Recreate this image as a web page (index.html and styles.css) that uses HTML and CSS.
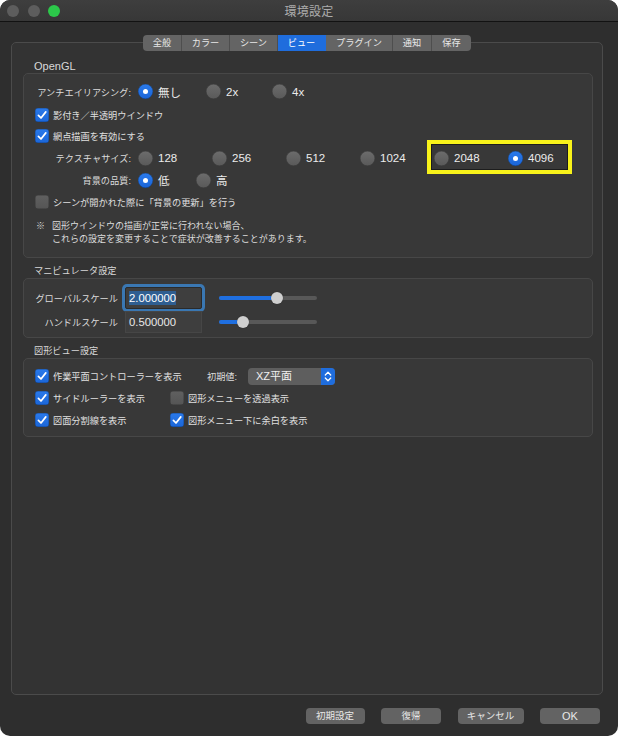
FILE: index.html
```html
<!DOCTYPE html>
<html lang="ja">
<head>
<meta charset="utf-8">
<title>環境設定</title>
<link rel="stylesheet" href="styles.css">
</head>
<body>
<div class="window">
  <div class="titlebar">
    <div class="lights">
      <span class="light grey"></span>
      <span class="light grey"></span>
      <span class="light green"></span>
    </div>
    <div class="title">環境設定</div>
    <div></div>
  </div>
  <div class="content">
    <div class="tabbox">
      <div class="tabs">
        <span class="tab w39">全般</span>
        <span class="tab w48">カラー</span>
        <span class="tab w48">シーン</span>
        <span class="tab w48 active">ビュー</span>
        <span class="tab w67">プラグイン</span>
        <span class="tab w39">通知</span>
        <span class="tab w39 last">保存</span>
      </div>

      <div class="sec-title latin">OpenGL</div>
      <div class="group g1">
        <div class="row h23">
          <span class="lbl lbl-aa">アンチエイリアシング:</span>
          <span class="ritem aa1"><i class="radio on"></i><span class="rl">無し</span></span>
          <span class="ritem aa2"><i class="radio"></i><span class="rl">2x</span></span>
          <span class="ritem"><i class="radio"></i><span class="rl">4x</span></span>
        </div>
        <div class="row h23">
          <span class="cb on"><svg viewBox="0 0 14 14"><path d="M3.4 7.4 L6 10 L10.8 3.9"/></svg></span>
          <span class="cbl">影付き／半透明ウインドウ</span>
        </div>
        <div class="row h20">
          <span class="cb on"><svg viewBox="0 0 14 14"><path d="M3.4 7.4 L6 10 L10.8 3.9"/></svg></span>
          <span class="cbl">網点描画を有効にする</span>
        </div>
        <div class="row h24">
          <span class="lbl lbl-aa">テクスチャサイズ:</span>
          <span class="ritem tx"><i class="radio"></i><span class="rl">128</span></span>
          <span class="ritem tx"><i class="radio"></i><span class="rl">256</span></span>
          <span class="ritem tx"><i class="radio"></i><span class="rl">512</span></span>
          <span class="ritem tx"><i class="radio"></i><span class="rl">1024</span></span>
          <span class="ritem tx"><i class="radio"></i><span class="rl">2048</span></span>
          <span class="ritem tx"><i class="radio on"></i><span class="rl">4096</span></span>
        </div>
        <div class="row h20">
          <span class="lbl lbl-aa">背景の品質:</span>
          <span class="ritem q1"><i class="radio on"></i><span class="rl">低</span></span>
          <span class="ritem"><i class="radio"></i><span class="rl">高</span></span>
        </div>
        <div class="row h24">
          <span class="cb"></span>
          <span class="cbl">シーンが開かれた際に「背景の更新」を行う</span>
        </div>
        <div class="note">
          <span class="mark">※</span>
          <span class="note-text">図形ウインドウの描画が正常に行われない場合、<br>これらの設定を変更することで症状が改善することがあります。</span>
        </div>
        <div class="highlight"></div>
      </div>

      <div class="sec-title spaced">マニピュレータ設定</div>
      <div class="group g2">
        <div class="row h22">
          <span class="lbl lbl-m">グローバルスケール</span>
          <span class="field focus"><span class="sel">2.000000</span></span>
          <span class="slider"><span class="track"><span class="fill" style="width:58px"></span></span><span class="knob" style="left:52px"></span></span>
        </div>
        <div class="row h22 gap2">
          <span class="lbl lbl-m">ハンドルスケール</span>
          <span class="field">0.500000</span>
          <span class="slider"><span class="track"><span class="fill" style="width:24px"></span></span><span class="knob" style="left:18px"></span></span>
        </div>
      </div>

      <div class="sec-title spaced">図形ビュー設定</div>
      <div class="group g3">
        <div class="row h22">
          <span class="col1">
            <span class="cb on"><svg viewBox="0 0 14 14"><path d="M3.4 7.4 L6 10 L10.8 3.9"/></svg></span>
            <span class="cbl">作業平面コントローラーを表示</span>
          </span>
          <span class="lbl lbl-init">初期値:</span>
          <span class="popup"><span class="popup-text">XZ平面</span><span class="stepper"><svg viewBox="0 0 14 17"><path d="M4.3 7 L7 4.3 L9.7 7 M4.3 10 L7 12.7 L9.7 10"/></svg></span></span>
        </div>
        <div class="row h22">
          <span class="col1">
            <span class="cb on"><svg viewBox="0 0 14 14"><path d="M3.4 7.4 L6 10 L10.8 3.9"/></svg></span>
            <span class="cbl">サイドルーラーを表示</span>
          </span>
          <span class="cb"></span>
          <span class="cbl">図形メニューを透過表示</span>
        </div>
        <div class="row h22">
          <span class="col1">
            <span class="cb on"><svg viewBox="0 0 14 14"><path d="M3.4 7.4 L6 10 L10.8 3.9"/></svg></span>
            <span class="cbl">図面分割線を表示</span>
          </span>
          <span class="cb on"><svg viewBox="0 0 14 14"><path d="M3.4 7.4 L6 10 L10.8 3.9"/></svg></span>
          <span class="cbl">図形メニュー下に余白を表示</span>
        </div>
      </div>
    </div>

    <div class="buttons">
      <span class="btn b59">初期設定</span>
      <span class="btn b60">復帰</span>
      <span class="btn b66">キャンセル</span>
      <span class="btn b60 latin">OK</span>
    </div>
  </div>
</div>
</body>
</html>
```
FILE: styles.css
```css
* { box-sizing: border-box; }
html, body { margin: 0; padding: 0; background: #ffffff; }
body {
  font-family: "Liberation Sans", "Noto Sans CJK JP", sans-serif;
  color: #dcdcdc;
}
.window {
  width: 618px;
  height: 736px;
  background: #2e2e2e;
  border-radius: 10px;
  overflow: hidden;
  display: flex;
  flex-direction: column;
}
.titlebar {
  height: 22px;
  flex: none;
  background: linear-gradient(#3e3e3e, #373737);
  border-bottom: 1px solid #121212;
  display: grid;
  grid-template-columns: 1fr auto 1fr;
  align-items: center;
}
.lights { display: flex; gap: 8.5px; padding-left: 7px; }
.light { width: 12px; height: 12px; border-radius: 50%; display: block; }
.light.grey { background: #5d5d5d; }
.light.green { background: #2cc84a; }
.title { font-size: 12px; color: #acacac; letter-spacing: 0.2px; }

.content { flex: 1; padding-top: 20px; }
.tabbox {
  margin: 0 15px 0 11px;
  height: 653px;
  border: 1px solid #4b4b4b;
  border-radius: 5px;
  background: #333333;
  position: relative;
  padding: 16px 9px 0 11px;
}
.tabs {
  position: absolute;
  top: -8px;
  left: 50%;
  transform: translateX(-50%);
  display: flex;
  height: 16px;
  border-radius: 4px;
  overflow: hidden;
  background: #646464;
}
.tab {
  height: 16px;
  line-height: 16px;
  text-align: center;
  font-size: 9.2px;
  color: #e8e8e8;
  border-right: 1px solid #4e4e4e;
}
.tab.last { border-right: none; }
.tab.active { background: #1f6ddd; color: #ffffff; border-right-color: #1f6ddd; }
.w39 { width: 39px; }
.w48 { width: 48px; }
.w67 { width: 67px; }

.sec-title {
  height: 14px;
  line-height: 14px;
  font-size: 9.2px;
  color: #d8d8d8;
  padding-left: 11px;
}
.sec-title.latin { font-size: 11px; }
.sec-title.spaced { margin-top: 6px; }

.group {
  border: 1px solid #474747;
  border-radius: 5px;
  background: #383838;
  padding-left: 11px;
  position: relative;
}
.g1 { height: 185px; padding-top: 6px; }
.g2 { height: 60px; padding-top: 8px; }
.g3 { height: 79px; padding-top: 6px; }

.row { display: flex; align-items: center; }
.h20 { height: 20px; }
.h22 { height: 22px; }
.h23 { height: 23px; }
.h24 { height: 24px; }
.gap2 { margin-top: 2px; }

.lbl {
  font-size: 9.2px;
  color: #dcdcdc;
  white-space: nowrap;
  text-align: right;
  flex: none;
}
.lbl-aa { width: 96px; margin-right: 7px; }
.lbl-m { width: 83px; margin-right: 7px; }
.lbl-init { text-align: left; width: 41px; margin-left: 37px; }

.ritem { display: flex; align-items: center; flex: none; }
.aa1 { width: 68px; }
.aa2 { width: 66px; }
.tx { width: 74px; }
.q1 { width: 58px; }
.radio {
  width: 15px;
  height: 15px;
  border-radius: 50%;
  background: linear-gradient(#6c6c6c, #595959);
  box-shadow: inset 0 0 0 0.5px rgba(0,0,0,0.35);
  display: block;
  position: relative;
  flex: none;
}
.radio.on { background: linear-gradient(#2b7bec, #1a64d6); }
.radio.on::after {
  content: "";
  position: absolute;
  width: 5px;
  height: 5px;
  border-radius: 50%;
  background: #ffffff;
  left: 5px;
  top: 5px;
}
.rl { font-size: 11.5px; color: #ececec; margin-left: 5px; white-space: nowrap; }

.cb {
  width: 14px;
  height: 14px;
  border-radius: 3px;
  background: linear-gradient(#606060, #555555);
  box-shadow: inset 0 0 0 0.5px rgba(0,0,0,0.35);
  display: block;
  flex: none;
}
.cb.on { background: linear-gradient(#2a79ea, #1b66d8); }
.cb svg { width: 14px; height: 14px; display: block; }
.cb svg path { fill: none; stroke: #ffffff; stroke-width: 1.7; stroke-linecap: round; stroke-linejoin: round; }
.cbl { font-size: 9.2px; color: #e0e0e0; margin-left: 4px; white-space: nowrap; }

.note { display: flex; margin-top: 6px; margin-left: 1px; font-size: 9px; line-height: 13px; color: #dcdcdc; }
.mark { width: 16px; flex: none; }
.highlight {
  position: absolute;
  left: 403px;
  top: 66px;
  width: 145px;
  height: 34px;
  border: 4px solid #f8f21a;
  box-shadow: inset 0 0 0 1px #1d1d1d;
}

.field {
  width: 77px;
  height: 22px;
  background: #3e3e3e;
  border: 1px solid #464646;
  font-size: 11.3px;
  color: #e8e8e8;
  padding-left: 3px;
  line-height: 20px;
  flex: none;
}
.field.focus {
  box-shadow: 0 0 0 3px #3a77b2;
  border-radius: 2px;
  border-color: #2a2a2a;
}
.sel { background: #2f5e91; color: #ffffff; padding: 1px 0; }
.slider {
  width: 98px;
  height: 12px;
  margin-left: 17px;
  position: relative;
  display: flex;
  align-items: center;
  flex: none;
}
.track { width: 100%; height: 4px; border-radius: 2px; background: #585858; display: block; overflow: hidden; }
.fill { height: 4px; background: #1f6fe0; display: block; }
.knob {
  position: absolute;
  top: 0;
  width: 12px;
  height: 12px;
  border-radius: 50%;
  background: #cfcfcf;
  box-shadow: 0 0 1px rgba(0,0,0,0.5);
}

.col1 { width: 135px; display: flex; align-items: center; flex: none; }
.popup {
  width: 87px;
  height: 17px;
  border-radius: 4px;
  background: #5e5e5e;
  display: flex;
  overflow: hidden;
  flex: none;
}
.popup-text { flex: 1; padding-left: 8px; font-size: 11px; line-height: 17px; color: #f0f0f0; }
.stepper { width: 14px; background: #1f6ddd; display: block; }
.stepper svg { width: 14px; height: 17px; display: block; }
.stepper svg path { fill: none; stroke: #ffffff; stroke-width: 1.3; stroke-linecap: round; stroke-linejoin: round; }

.buttons {
  display: flex;
  justify-content: flex-end;
  gap: 16.5px;
  margin-top: 13px;
  padding-right: 18px;
}
.btn {
  height: 16px;
  line-height: 16px;
  border-radius: 4px;
  background: #636363;
  text-align: center;
  font-size: 9.5px;
  color: #e8e8e8;
}
.btn.latin { font-size: 11px; }
.b59 { width: 59px; }
.b60 { width: 60px; }
.b66 { width: 66px; }
```
